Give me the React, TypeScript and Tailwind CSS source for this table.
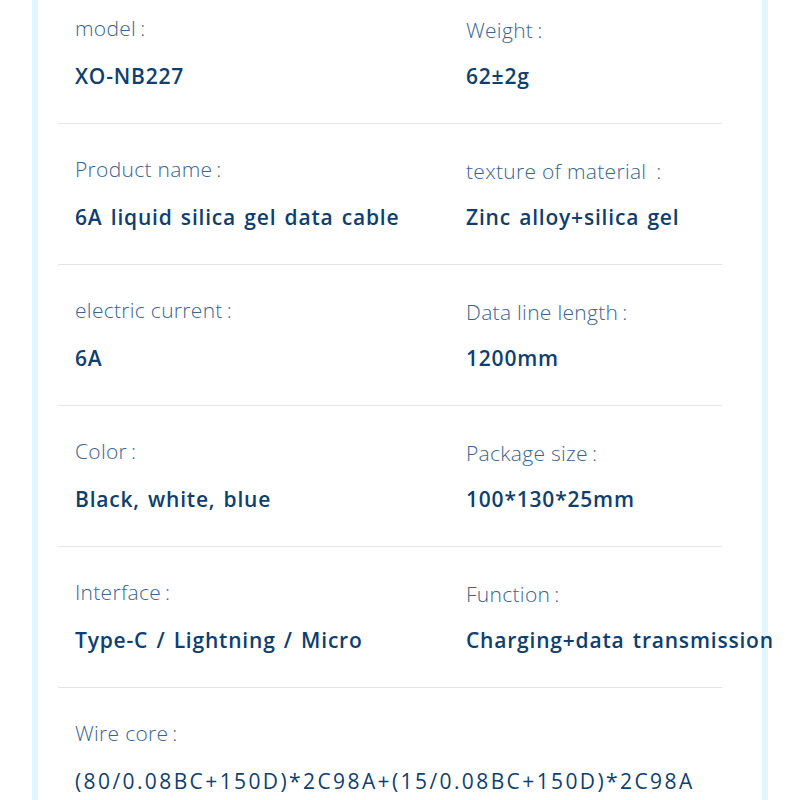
const specs: [string, string][][] = [
  [
    ['model', 'XO-NB227'],
    ['Weight', '62±2g'],
  ],
  [
    ['Product name', '6A liquid silica gel data cable'],
    ['texture of material ', 'Zinc alloy+silica gel'],
  ],
  [
    ['electric current', '6A'],
    ['Data line length', '1200mm'],
  ],
  [
    ['Color', 'Black, white, blue'],
    ['Package size', '100*130*25mm'],
  ],
  [
    ['Interface', 'Type-C / Lightning / Micro'],
    ['Function', 'Charging+data transmission'],
  ],
];

function Label({ text }: { text: string }) {
  return (
    <div className="h-[30px] leading-[30px] text-[21px] font-light tracking-[0.3px] text-[#3a6593] whitespace-pre">
      {text}
      <span className="ml-[4px]">:</span>
    </div>
  );
}

function Cell({ label, value, right }: { label: string; value: string; right?: boolean }) {
  return (
    <div className={right ? 'flex flex-col gap-[16px] pt-[2px] whitespace-nowrap' : 'flex flex-col gap-[18px] whitespace-nowrap'}>
      <Label text={label} />
      <div className="h-[30px] leading-[30px] text-[21px] font-semibold tracking-[0.8px] [word-spacing:2px] text-[#0e3f70]">
        {value}
      </div>
    </div>
  );
}

export default function App() {
  return (
    <div className="w-[800px] h-[800px] overflow-hidden bg-white px-[32px]" style={{ fontFamily: '"Open Sans", "Noto Sans", sans-serif' }}>
      <div className="h-full flex flex-col border-x-[6px] border-[#e2f6fd] pl-[20px]">
        <div className="w-[664px] -mt-[17px]">
          {specs.map((row, i) => (
            <div key={i} className="border-b border-[#e6e6e6] pt-[30px] pb-[32px]">
              <div className="grid grid-cols-[391px_1fr] pl-[17px]">
                <Cell label={row[0][0]} value={row[0][1]} />
                <Cell label={row[1][0]} value={row[1][1]} right />
              </div>
            </div>
          ))}
          <div className="pt-[30px] pl-[17px] flex flex-col gap-[18px] whitespace-nowrap">
            <Label text="Wire core" />
            <div className="h-[30px] leading-[30px] text-[21px] text-[#0e3f70] tracking-[2.4px]">
              (80/0.08BC+150D)*2C98A+(15/0.08BC+150D)*2C98A
            </div>
          </div>
        </div>
      </div>
    </div>
  );
}
